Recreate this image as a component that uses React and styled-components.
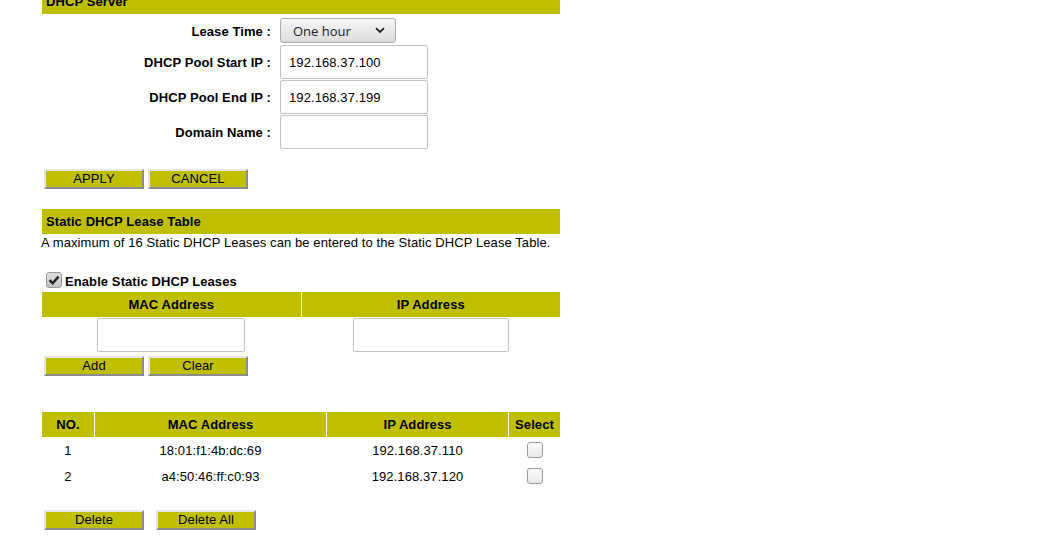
import React from "react";
import styled, { createGlobalStyle } from "styled-components";

const GlobalStyle = createGlobalStyle`
  html, body {
    margin: 0;
    padding: 0;
    background: #ffffff;
  }
  body {
    font-family: "Liberation Sans", Arial, sans-serif;
    font-size: 13px;
    letter-spacing: 0.09px;
    color: #000;
  }
`;

const OLIVE = "#bfbf00";

const Page = styled.div`
  width: 518px;
  margin: -11px 0 0 42px;
`;

const SectionBar = styled.div`
  height: 25px;
  line-height: 25px;
  background: ${OLIVE};
  font-weight: bold;
  padding-left: 4px;
  margin-top: ${(p) => p.$top || 0}px;
`;

const FormGrid = styled.div`
  display: grid;
  grid-template-columns: 229px 1fr;
  column-gap: 9px;
  padding-top: 4px;
`;

const Label = styled.div`
  display: flex;
  align-items: center;
  justify-content: flex-end;
  font-weight: bold;
  box-sizing: border-box;
  height: ${(p) => p.$h}px;
  padding-top: ${(p) => p.$pt || 0}px;
  margin-bottom: ${(p) => p.$mb || 0}px;
`;

const Field = styled.div`
  display: flex;
  align-items: center;
  height: ${(p) => p.$h}px;
  margin-bottom: ${(p) => p.$mb || 0}px;
`;

const SelectWrap = styled.div`
  position: relative;
  width: 116px;
  height: 25px;
`;

const Select = styled.select`
  appearance: none;
  width: 100%;
  height: 100%;
  box-sizing: border-box;
  border: 1px solid #acacac;
  border-radius: 3px;
  background: linear-gradient(#f6f6f6, #dcdcdc);
  font-family: "Open Sans", "Liberation Sans", sans-serif;
  font-size: 13px;
  color: #222;
  padding: 0 0 0 12px;
  outline: none;
`;

const Chevron = styled.svg`
  position: absolute;
  right: 11px;
  top: 9px;
  pointer-events: none;
`;

const TextInput = styled.input`
  box-sizing: border-box;
  width: ${(p) => p.$w || 148}px;
  height: 34px;
  border: 1px solid #c3c3c3;
  border-radius: 2px;
  padding: 0 0 0 8px;
  font-family: "Liberation Sans", Arial, sans-serif;
  font-size: 13px;
  letter-spacing: 0.09px;
  color: #000;
  outline: none;
`;

const ButtonRow = styled.div`
  display: flex;
  gap: ${(p) => p.$gap || 4}px;
  padding-left: 2px;
  margin-top: ${(p) => p.$top || 0}px;
`;

const OliveButton = styled.button`
  box-sizing: border-box;
  width: 100px;
  height: 20px;
  padding: 0;
  background: ${OLIVE};
  border: 2px solid;
  border-color: #e6e6e6 #8c8c8c #8c8c8c #e6e6e6;
  font-family: "Liberation Sans", Arial, sans-serif;
  font-size: 13px;
  letter-spacing: 0.09px;
  line-height: 16px;
  color: #000;
`;

const Note = styled.div`
  margin-left: -1px;
  padding-top: 1px;
  line-height: 16px;
  white-space: nowrap;
`;

const CheckLine = styled.label`
  display: flex;
  align-items: center;
  gap: 3px;
  height: 21px;
  margin-top: 20px;
  padding-left: 4px;
  font-weight: bold;
`;

const Box = styled.span`
  box-sizing: border-box;
  width: 16px;
  height: 16px;
  border: 1px solid #9a9a9a;
  border-radius: 3px;
  background: ${(p) => (p.$on ? "linear-gradient(#dedede, #c4c4c4)" : "linear-gradient(#fbfbfb, #e9e9e9)")};
  display: inline-flex;
  align-items: center;
  justify-content: center;
  margin-top: ${(p) => (p.$on ? -3 : 0)}px;
`;

const HeadGrid = styled.div`
  display: grid;
  grid-template-columns: ${(p) => p.$cols};
  column-gap: 1px;
  margin-top: ${(p) => p.$top || 0}px;
`;

const HeadCell = styled.div`
  height: 25px;
  line-height: 25px;
  background: ${OLIVE};
  font-weight: bold;
  text-align: center;
`;

const InputCell = styled.div`
  display: flex;
  justify-content: center;
  padding-top: 1px;
  height: 37px;
`;

const BodyCell = styled.div`
  height: 26px;
  display: flex;
  align-items: center;
  justify-content: center;
`;

function Check({ on }) {
  return (
    <Box $on={on}>
      {on && (
        <svg width="12" height="10" viewBox="0 0 12 10">
          <path d="M1.5 5.2 L4.6 8.2 L10.6 1.6" fill="none" stroke="#222" strokeWidth="2.4" />
        </svg>
      )}
    </Box>
  );
}

const leases = [
  { no: 1, mac: "18:01:f1:4b:dc:69", ip: "192.168.37.110" },
  { no: 2, mac: "a4:50:46:ff:c0:93", ip: "192.168.37.120" },
];

export default function App() {
  return (
    <Page>
      <GlobalStyle />
      <SectionBar>DHCP Server</SectionBar>
      <FormGrid>
        <Label $h={25} $mb={2} $pt={2}>Lease Time :</Label>
        <Field $h={25} $mb={2}>
          <SelectWrap>
            <Select defaultValue="1h">
              <option value="1h">One hour</option>
            </Select>
            <Chevron width="10" height="7" viewBox="0 0 10 7">
              <path d="M1 1.2 L5 5 L9 1.2" fill="none" stroke="#222" strokeWidth="1.8" />
            </Chevron>
          </SelectWrap>
        </Field>
        <Label $h={34} $mb={1}>DHCP Pool Start IP :</Label>
        <Field $h={34} $mb={1}>
          <TextInput defaultValue="192.168.37.100" />
        </Field>
        <Label $h={34} $mb={1}>DHCP Pool End IP :</Label>
        <Field $h={34} $mb={1}>
          <TextInput defaultValue="192.168.37.199" />
        </Field>
        <Label $h={34}>Domain Name :</Label>
        <Field $h={34}>
          <TextInput defaultValue="" />
        </Field>
      </FormGrid>

      <ButtonRow $top={20}>
        <OliveButton>APPLY</OliveButton>
        <OliveButton>CANCEL</OliveButton>
      </ButtonRow>

      <SectionBar $top={20}>Static DHCP Lease Table</SectionBar>
      <Note>A maximum of 16 Static DHCP Leases can be entered to the Static DHCP Lease Table.</Note>

      <CheckLine>
        <Check on />
        Enable Static DHCP Leases
      </CheckLine>

      <HeadGrid $cols="1fr 1fr">
        <HeadCell>MAC Address</HeadCell>
        <HeadCell>IP Address</HeadCell>
        <InputCell>
          <TextInput $w={148} />
        </InputCell>
        <InputCell>
          <TextInput $w={156} />
        </InputCell>
      </HeadGrid>

      <ButtonRow $top={1}>
        <OliveButton>Add</OliveButton>
        <OliveButton>Clear</OliveButton>
      </ButtonRow>

      <HeadGrid $cols="52px 231px 181px 1fr" $top={36}>
        <HeadCell>NO.</HeadCell>
        <HeadCell>MAC Address</HeadCell>
        <HeadCell>IP Address</HeadCell>
        <HeadCell>Select</HeadCell>
        {leases.map((l) => (
          <React.Fragment key={l.no}>
            <BodyCell>{l.no}</BodyCell>
            <BodyCell>{l.mac}</BodyCell>
            <BodyCell>{l.ip}</BodyCell>
            <BodyCell>
              <Check />
            </BodyCell>
          </React.Fragment>
        ))}
      </HeadGrid>

      <ButtonRow $top={21} $gap={12}>
        <OliveButton>Delete</OliveButton>
        <OliveButton>Delete All</OliveButton>
      </ButtonRow>
    </Page>
  );
}
